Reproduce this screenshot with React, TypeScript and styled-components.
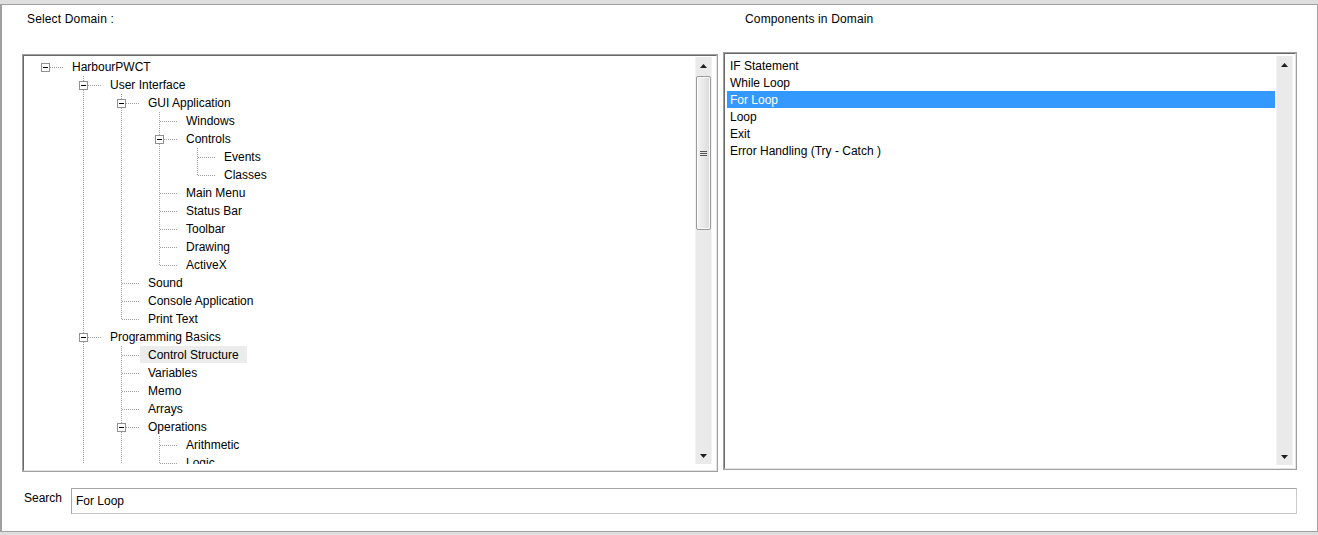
import React from "react";
import styled, { createGlobalStyle } from "styled-components";

const GlobalStyle = createGlobalStyle`
  html, body {
    margin: 0;
    padding: 0;
    background: #dedede;
  }
  body {
    font-family: "Liberation Sans", Arial, sans-serif;
    font-size: 12px;
    color: #000;
  }
  * {
    box-sizing: border-box;
  }
`;

const Window = styled.div`
  margin-top: 4px;
  width: 1318px;
  height: 528px;
  background: #fff;
  border: 1px solid #a0a0a0;
  border-left-width: 2px;
  padding: 7px 20px 0 20px;
  display: flex;
  flex-direction: column;
`;

const Columns = styled.div`
  display: grid;
  grid-template-columns: 696px 574px;
  column-gap: 5px;
  align-items: start;
`;

const Caption = styled.div<{ $indent: number }>`
  height: 14px;
  line-height: 14px;
  padding-left: ${({ $indent }) => $indent}px;
  letter-spacing: 0.15px;
`;

const Panes = styled(Columns)`
  margin-top: 26px;
`;

const Frame = styled.div<{ $offset?: number }>`
  height: 418px;
  margin-top: ${({ $offset }) => $offset ?? 0}px;
  border: 1px solid #a0a0a0;
`;

const FrameInner = styled.div<{ $pad: string }>`
  height: 100%;
  display: flex;
  border: 1px solid;
  border-color: #696969 #e3e3e3 #e3e3e3 #696969;
  padding: ${({ $pad }) => $pad};
`;

/* ---------- tree ---------- */

const TreeBody = styled.div`
  flex: 1;
  overflow: hidden;
  padding-top: 1px;
`;

const TreeRow = styled.div`
  display: flex;
  height: 18px;
  padding-left: 1px;
  white-space: nowrap;
`;

const dotsDown = "repeating-linear-gradient(to bottom, #a0a0a0 0 1px, transparent 1px 2px)";
const dotsRight = "repeating-linear-gradient(to right, #a0a0a0 0 1px, transparent 1px 2px)";

const GuideCell = styled.span<{ $line: boolean }>`
  flex: none;
  width: 38px;
  height: 18px;
  background: ${({ $line }) => ($line ? dotsDown : "none")} 19px 0 / 1px 18px no-repeat;
`;

const Branch = styled.span<{ $root: boolean; $next: boolean }>`
  position: relative;
  flex: none;
  width: 38px;
  height: 18px;

  &::before {
    content: "";
    display: ${({ $root }) => ($root ? "none" : "block")};
    position: absolute;
    left: 19px;
    top: 0;
    width: 1px;
    height: ${({ $next }) => ($next ? 18 : 10)}px;
    background: ${dotsDown};
  }

  &::after {
    content: "";
    position: absolute;
    left: 20px;
    top: 9px;
    width: 17px;
    height: 1px;
    background: ${dotsRight};
  }
`;

const ExpandBox = styled.span`
  position: absolute;
  z-index: 1;
  left: 15px;
  top: 5px;
  width: 9px;
  height: 9px;
  background: #fff;
  border: 1px solid #919191;

  &::after {
    content: "";
    position: absolute;
    left: 1px;
    top: 3px;
    width: 5px;
    height: 1px;
    background: #000;
  }
`;

const TreeLabel = styled.span<{ $selected?: boolean }>`
  height: 17px;
  line-height: 18px;
  padding: 0 8px;
  background: ${({ $selected }) => ($selected ? "#ececec" : "transparent")};
`;

/* ---------- scrollbar ---------- */

const ScrollBar = styled.div`
  flex: none;
  width: 17px;
  display: flex;
  flex-direction: column;
  background: #eaeaea;
  border-left: 1px solid #f2f2f2;
  border-right: 1px solid #f2f2f2;
`;

const ArrowButton = styled.div`
  flex: none;
  height: 17px;
  display: flex;
  align-items: center;
  justify-content: center;
`;

const Track = styled.div`
  flex: 1;
  display: flex;
  flex-direction: column;
`;

const Thumb = styled.div<{ $top: number; $size: number }>`
  margin-top: ${({ $top }) => $top}px;
  height: ${({ $size }) => $size}px;
  border: 1px solid #9a9a9a;
  border-radius: 2px;
  background: linear-gradient(to right, #f4f4f4, #e8e8e8 50%, #dadada);
  box-shadow: inset 0 0 0 1px #fbfbfb;
  display: flex;
  align-items: center;
  justify-content: center;
`;

const Arrow = ({ up }: { up?: boolean }) => (
  <svg width="7" height="4" viewBox="0 0 7 4">
    <path d={up ? "M0 4 L3.5 0 L7 4 Z" : "M0 0 L7 0 L3.5 4 Z"} fill="#1e1e1e" />
  </svg>
);

const Grip = () => (
  <svg width="7" height="5" viewBox="0 0 7 5">
    <path d="M0 0.5 H7 M0 2.5 H7 M0 4.5 H7" stroke="#555" strokeWidth="1" />
  </svg>
);

const VScroll = ({ thumb }: { thumb?: { top: number; size: number } }) => (
  <ScrollBar>
    <ArrowButton>
      <Arrow up />
    </ArrowButton>
    <Track>
      {thumb && (
        <Thumb $top={thumb.top} $size={thumb.size}>
          <Grip />
        </Thumb>
      )}
    </Track>
    <ArrowButton>
      <Arrow />
    </ArrowButton>
  </ScrollBar>
);

/* ---------- list ---------- */

const ListBody = styled.div`
  flex: 1;
  padding-top: 1px;
`;

const ListItem = styled.div<{ $selected?: boolean }>`
  height: 17px;
  line-height: 19px;
  padding-left: 3px;
  margin-right: 1px;
  background: ${({ $selected }) => ($selected ? "#3399ff" : "transparent")};
  color: ${({ $selected }) => ($selected ? "#fff" : "#000")};
`;

/* ---------- search ---------- */

const SearchRow = styled.div`
  display: flex;
  align-items: flex-start;
  margin-top: 16px;
  padding-left: 2px;
`;

const SearchLabel = styled.label`
  width: 47px;
  margin-top: 3px;
  line-height: 14px;
`;

const SearchInput = styled.input`
  flex: 1;
  height: 26px;
  margin: 0;
  padding: 0 4px;
  font-family: "Liberation Sans", Arial, sans-serif;
  font-size: 12px;
  color: #000;
  border: 1px solid;
  border-color: #a6a6a6 #cbcbcb #c4c4c4 #a6a6a6;
  outline: none;
  background: #fff;
`;

/* ---------- data ---------- */

interface TreeNode {
  label: string;
  children?: TreeNode[];
  more?: boolean;
  selected?: boolean;
}

interface FlatRow {
  label: string;
  level: number;
  hasNext: boolean;
  expandable: boolean;
  selected: boolean;
  guides: boolean[];
}

const tree: TreeNode[] = [
  {
    label: "HarbourPWCT",
    children: [
      {
        label: "User Interface",
        children: [
          {
            label: "GUI Application",
            children: [
              { label: "Windows" },
              { label: "Controls", children: [{ label: "Events" }, { label: "Classes" }] },
              { label: "Main Menu" },
              { label: "Status Bar" },
              { label: "Toolbar" },
              { label: "Drawing" },
              { label: "ActiveX" },
            ],
          },
          { label: "Sound" },
          { label: "Console Application" },
          { label: "Print Text" },
        ],
      },
      {
        label: "Programming Basics",
        more: true,
        children: [
          { label: "Control Structure", selected: true },
          { label: "Variables" },
          { label: "Memo" },
          { label: "Arrays" },
          {
            label: "Operations",
            more: true,
            children: [{ label: "Arithmetic" }, { label: "Logic", more: true }],
          },
        ],
      },
    ],
  },
];

const flatten = (nodes: TreeNode[], level: number, guides: boolean[]): FlatRow[] =>
  nodes.flatMap((n, i) => {
    const hasNext = i < nodes.length - 1 || !!n.more;
    const row: FlatRow = {
      label: n.label,
      level,
      hasNext,
      expandable: !!n.children,
      selected: !!n.selected,
      guides,
    };
    const kids = n.children
      ? flatten(n.children, level + 1, level === 0 ? [] : [...guides, hasNext])
      : [];
    return [row, ...kids];
  });

const rows = flatten(tree, 0, []);

const components = [
  "IF Statement",
  "While Loop",
  "For Loop",
  "Loop",
  "Exit",
  "Error Handling (Try - Catch )",
];

const App = () => {
  return (
    <>
      <GlobalStyle />
      <Window>
        <Columns>
          <Caption $indent={5}>Select Domain :</Caption>
          <Caption $indent={22}>Components in Domain</Caption>
        </Columns>

        <Panes>
          <Frame $offset={2}>
            <FrameInner $pad="1px 4px 6px 1px">
              <TreeBody>
                {rows.map((r, idx) => (
                  <TreeRow key={idx}>
                    {r.level > 0 &&
                      [false, ...r.guides].map((g, k) => <GuideCell key={k} $line={g} />)}
                    <Branch $root={r.level === 0} $next={r.hasNext}>
                      {r.expandable && <ExpandBox />}
                    </Branch>
                    <TreeLabel $selected={r.selected}>{r.label}</TreeLabel>
                  </TreeRow>
                ))}
              </TreeBody>
              <VScroll thumb={{ top: 2, size: 154 }} />
            </FrameInner>
          </Frame>

          <Frame>
            <FrameInner $pad="2px 2px 3px 2px">
              <ListBody>
                {components.map((c) => (
                  <ListItem key={c} $selected={c === "For Loop"}>
                    {c}
                  </ListItem>
                ))}
              </ListBody>
              <VScroll />
            </FrameInner>
          </Frame>
        </Panes>

        <SearchRow>
          <SearchLabel>Search</SearchLabel>
          <SearchInput value="For Loop" readOnly />
        </SearchRow>
      </Window>
    </>
  );
};

export default App;
